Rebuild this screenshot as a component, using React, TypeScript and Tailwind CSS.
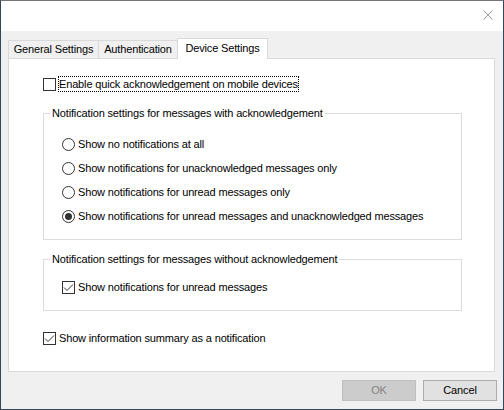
import React from 'react';

function CheckBox({ checked }: { checked?: boolean }) {
    return (
        <span className="w-[13px] h-[13px] shrink-0 border border-[#333333] bg-white flex items-center justify-center">
            {checked && (
                <svg width="11" height="11" viewBox="0 0 11 11">
                    <polyline points="1,5.5 4,8.5 10,2.5" fill="none" stroke="#333333" strokeWidth="1" />
                </svg>
            )}
        </span>
    );
}

function Radio({ checked }: { checked?: boolean }) {
    return (
        <span className="w-[13px] h-[13px] shrink-0 rounded-full border border-[#333333] bg-white flex items-center justify-center">
            {checked && <span className="w-[7px] h-[7px] rounded-full bg-[#333333]" />}
        </span>
    );
}

const radioOptions = [
    { label: 'Show no notifications at all', checked: false },
    { label: 'Show notifications for unacknowledged messages only', checked: false },
    { label: 'Show notifications for unread messages only', checked: false },
    { label: 'Show notifications for unread messages and unacknowledged messages', checked: true },
];

export default function App() {
    return (
        <div className="w-[504px] h-[410px] flex flex-col bg-[#f0f0f0] border-x border-b border-[#33475a] border-t border-t-[#767676] font-['Liberation_Sans',Arial,sans-serif] text-[11px] tracking-[-0.15px] text-black overflow-hidden select-none">
            {/* Title bar */}
            <div className="h-[30px] bg-white flex justify-end items-start pt-[9px] pr-[10px]">
                <svg width="10" height="10" viewBox="0 0 10 10">
                    <path d="M0.5 0.5 L9.5 9.5 M9.5 0.5 L0.5 9.5" stroke="#999999" strokeWidth="1" />
                </svg>
            </div>

            {/* Tabs */}
            <div className="mt-[7px] h-[20px] pl-[7px] flex items-end">
                <div className="w-[91px] h-[18px] border-l border-t border-r border-[#d9d9d9] flex items-center justify-center">
                    General Settings
                </div>
                <div className="w-[79px] h-[18px] border-t border-r border-[#d9d9d9] flex items-center justify-center">
                    Authentication
                </div>
                <div className="relative z-10 -ml-px -mb-px w-[91px] h-[21px] bg-white border-l border-t border-r border-[#d9d9d9] flex items-center justify-center pb-[2px]">
                    Device Settings
                </div>
            </div>

            {/* Panel */}
            <div className="ml-[7px] mr-[8px] h-[314px] bg-white border border-[#d9d9d9] pl-[34px] pt-[17px]">
                <div className="h-[16px] flex items-center">
                    <CheckBox />
                    <span className="ml-[2px] border border-dotted border-black leading-[14px]">
                        Enable quick acknowledgement on mobile devices
                    </span>
                </div>

                <fieldset className="mt-[14px] w-[419px] border border-[#dcdcdc] px-[6px] pt-[11px] pb-[11px]">
                    <legend className="px-[2px] leading-[15px]">
                        Notification settings for messages with acknowledgement
                    </legend>
                    {radioOptions.map((o) => (
                        <div key={o.label} className="h-[24px] ml-[12px] flex items-center gap-[3px]">
                            <Radio checked={o.checked} />
                            <span>{o.label}</span>
                        </div>
                    ))}
                </fieldset>

                <fieldset className="mt-[12px] w-[419px] border border-[#dcdcdc] px-[6px] pt-[8px] pb-[11px]">
                    <legend className="px-[2px] leading-[15px]">
                        Notification settings for messages without acknowledgement
                    </legend>
                    <div className="h-[24px] ml-[12px] flex items-center gap-[3px]">
                        <CheckBox checked />
                        <span>Show notifications for unread messages</span>
                    </div>
                </fieldset>

                <div className="mt-[19px] h-[16px] flex items-center gap-[3px]">
                    <CheckBox checked />
                    <span>Show information summary as a notification</span>
                </div>
            </div>

            {/* Buttons */}
            <div className="mt-[8px] flex justify-end gap-[7px] pr-[6px]">
                <button
                    disabled
                    className="w-[74px] h-[21px] bg-[#cccccc] border border-[#bfbfbf] text-[#838383] flex items-center justify-center"
                >
                    OK
                </button>
                <button className="w-[74px] h-[21px] bg-[#e1e1e1] border border-[#adadad] flex items-center justify-center">
                    Cancel
                </button>
            </div>
        </div>
    );
}
